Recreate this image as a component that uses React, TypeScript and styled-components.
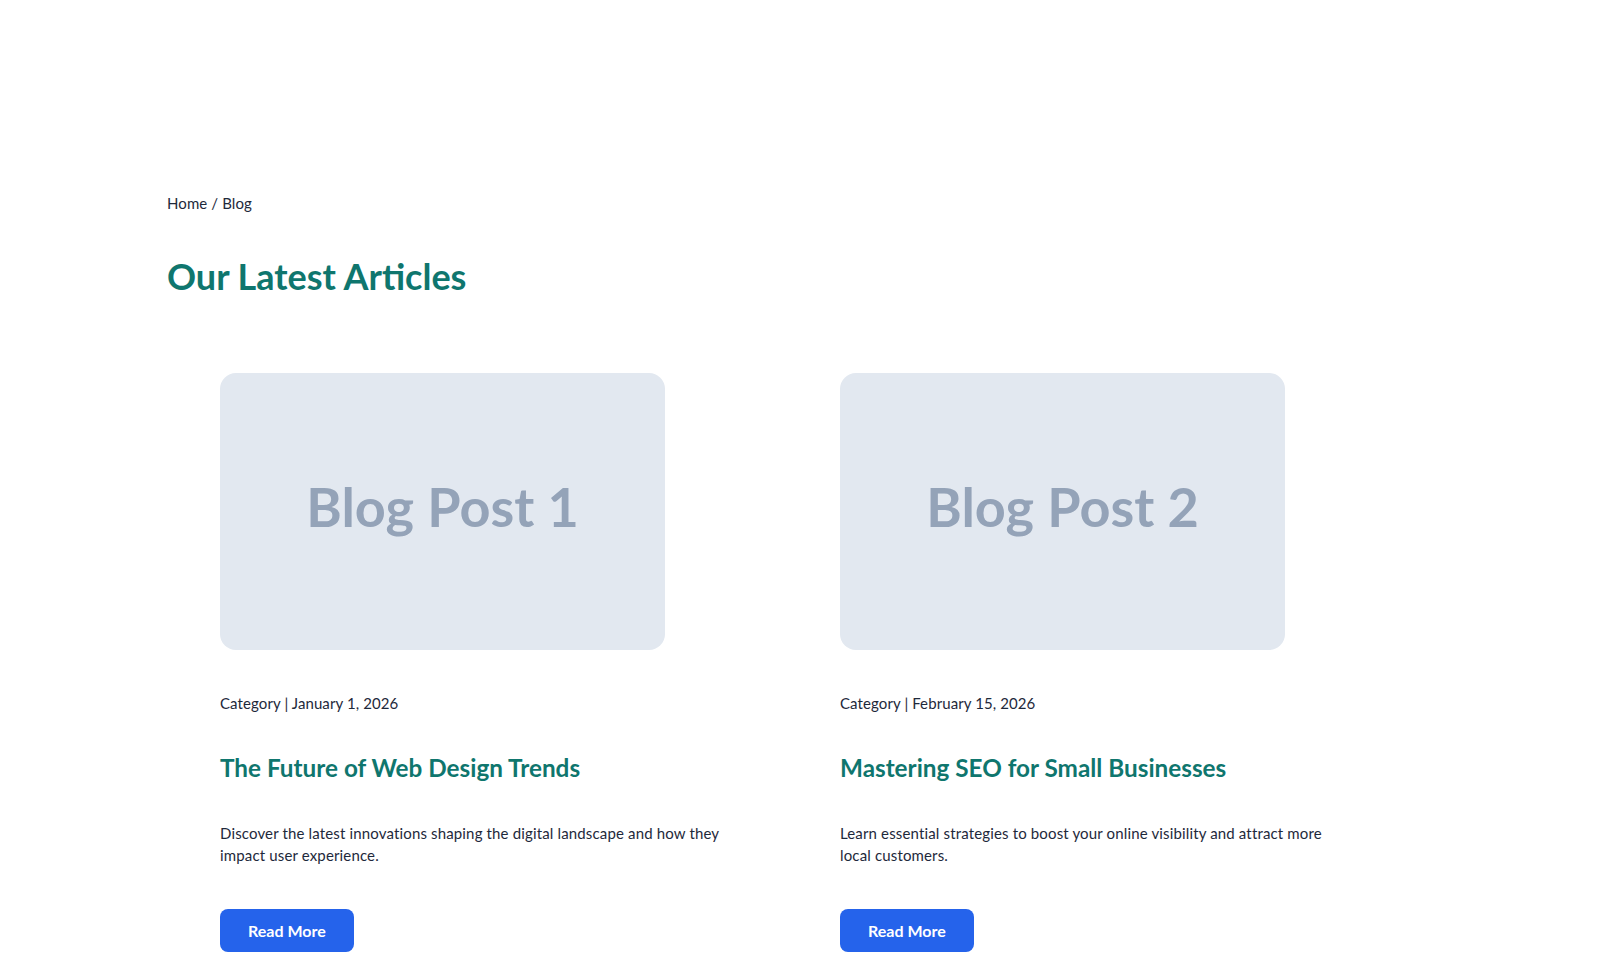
import React from 'react';
import styled, { createGlobalStyle } from 'styled-components';

interface Post {
  id: number
  label: string
  date: string
  title: string
  excerpt: string
}

const posts: Post[] = [
  {
    id: 1,
    label: 'Blog Post 1',
    date: 'January 1, 2026',
    title: 'The Future of Web Design Trends',
    excerpt: 'Discover the latest innovations shaping the digital landscape and how they impact user experience.',
  },
  {
    id: 2,
    label: 'Blog Post 2',
    date: 'February 15, 2026',
    title: 'Mastering SEO for Small Businesses',
    excerpt: 'Learn essential strategies to boost your online visibility and attract more local customers.',
  },
];

const GlobalStyle = createGlobalStyle`
  body {
    margin: 0;
    background: #ffffff;
    font-family: Lato, 'Noto Sans', sans-serif;
    color: #1e293b;
  }
`;

const Page = styled.main`
  padding: 191px 0 40px 167px;
`;

const Breadcrumb = styled.nav`
  font-size: 15px;
  line-height: 24px;
  letter-spacing: 0.1px;
  color: #1e293b;
`;

const Heading = styled.h1`
  margin: 39px 0 0;
  font-size: 36px;
  line-height: 44px;
  font-weight: 700;
  color: #0f766e;
`;

const Grid = styled.section`
  margin: 75px 0 0 53px;
  display: grid;
  grid-template-columns: 500px 500px;
  column-gap: 120px;
`;

const Card = styled.article`
  display: flex;
  flex-direction: column;
  align-items: flex-start;
`;

const Thumb = styled.div`
  width: 445px;
  height: 277px;
  box-sizing: border-box;
  padding-bottom: 10px;
  border-radius: 16px;
  background: #e2e8f0;
  display: flex;
  align-items: center;
  justify-content: center;
  font-family: Lato, sans-serif;
  font-weight: 700;
  font-size: 54px;
  color: #94a3b8;
`;

const Meta = styled.p`
  margin: 41px 0 0;
  font-size: 15px;
  line-height: 24px;
  letter-spacing: 0.1px;
`;

const Title = styled.h2`
  margin: 37px 0 0;
  font-size: 24.3px;
  line-height: 32px;
  font-weight: 700;
  color: #0f766e;
`;

const Excerpt = styled.p`
  margin: 38px 0 0;
  font-size: 15px;
  line-height: 22px;
  letter-spacing: 0.15px;
`;

const ReadMore = styled.button`
  margin-top: 43px;
  height: 43px;
  padding: 0 28px;
  border: none;
  border-radius: 8px;
  background: #2563eb;
  color: #ffffff;
  font-family: Lato, sans-serif;
  font-size: 16px;
  font-weight: 700;
  cursor: pointer;
`;

export default function App() {
  return (
    <>
      <GlobalStyle />
      <Page>
        <Breadcrumb>Home / Blog</Breadcrumb>
        <Heading>Our Latest Articles</Heading>
        <Grid>
          {posts.map((post) => (
            <Card key={post.id}>
              <Thumb>{post.label}</Thumb>
              <Meta>Category | {post.date}</Meta>
              <Title>{post.title}</Title>
              <Excerpt>{post.excerpt}</Excerpt>
              <ReadMore>Read More</ReadMore>
            </Card>
          ))}
        </Grid>
      </Page>
    </>
  );
}
